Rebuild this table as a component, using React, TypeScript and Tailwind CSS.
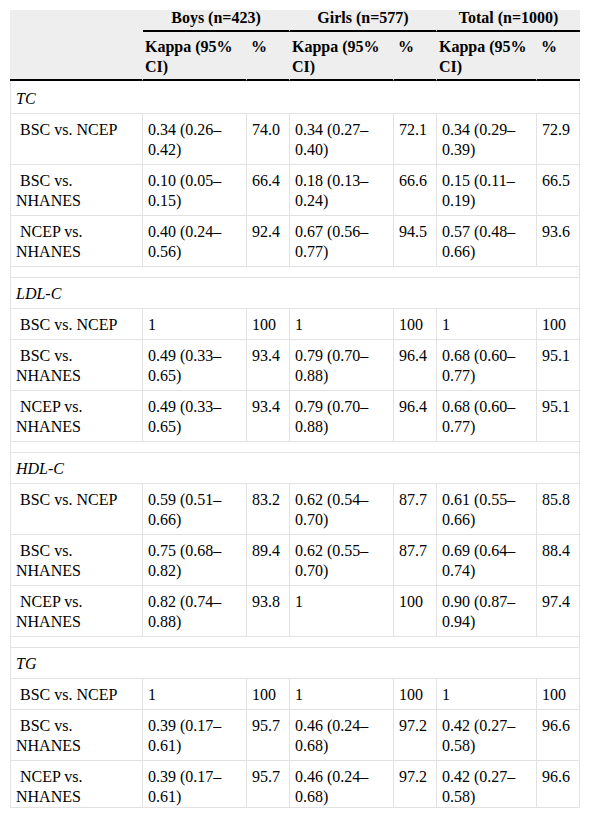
type Row = {
  label: string;
  cells: string[];
};

type Section = {
  title: string;
  rows: Row[];
};

const sections: Section[] = [
  {
    title: 'TC',
    rows: [
      { label: 'BSC vs. NCEP', cells: ['0.34 (0.26–0.42)', '74.0', '0.34 (0.27–0.40)', '72.1', '0.34 (0.29–0.39)', '72.9'] },
      { label: 'BSC vs. NHANES', cells: ['0.10 (0.05–0.15)', '66.4', '0.18 (0.13–0.24)', '66.6', '0.15 (0.11–0.19)', '66.5'] },
      { label: 'NCEP vs. NHANES', cells: ['0.40 (0.24–0.56)', '92.4', '0.67 (0.56–0.77)', '94.5', '0.57 (0.48–0.66)', '93.6'] },
    ],
  },
  {
    title: 'LDL-C',
    rows: [
      { label: 'BSC vs. NCEP', cells: ['1', '100', '1', '100', '1', '100'] },
      { label: 'BSC vs. NHANES', cells: ['0.49 (0.33–0.65)', '93.4', '0.79 (0.70–0.88)', '96.4', '0.68 (0.60–0.77)', '95.1'] },
      { label: 'NCEP vs. NHANES', cells: ['0.49 (0.33–0.65)', '93.4', '0.79 (0.70–0.88)', '96.4', '0.68 (0.60–0.77)', '95.1'] },
    ],
  },
  {
    title: 'HDL-C',
    rows: [
      { label: 'BSC vs. NCEP', cells: ['0.59 (0.51–0.66)', '83.2', '0.62 (0.54–0.70)', '87.7', '0.61 (0.55–0.66)', '85.8'] },
      { label: 'BSC vs. NHANES', cells: ['0.75 (0.68–0.82)', '89.4', '0.62 (0.55–0.70)', '87.7', '0.69 (0.64–0.74)', '88.4'] },
      { label: 'NCEP vs. NHANES', cells: ['0.82 (0.74–0.88)', '93.8', '1', '100', '0.90 (0.87–0.94)', '97.4'] },
    ],
  },
  {
    title: 'TG',
    rows: [
      { label: 'BSC vs. NCEP', cells: ['1', '100', '1', '100', '1', '100'] },
      { label: 'BSC vs. NHANES', cells: ['0.39 (0.17–0.61)', '95.7', '0.46 (0.24–0.68)', '97.2', '0.42 (0.27–0.58)', '96.6'] },
      { label: 'NCEP vs. NHANES', cells: ['0.39 (0.17–0.61)', '95.7', '0.46 (0.24–0.68)', '97.2', '0.42 (0.27–0.58)', '96.6'] },
    ],
  },
];

const groups = ['Boys (n=423)', 'Girls (n=577)', 'Total (n=1000)'];

export default function App() {
  return (
    <div className="min-h-screen bg-white pl-[10px] pt-[10px] font-['Liberation_Serif',serif] text-[16px] leading-5 text-black">
      <table className="w-[570px] table-fixed border-separate border-spacing-0">
        <colgroup>
          <col className="w-[133px]" />
          <col className="w-[104px]" />
          <col className="w-[43px]" />
          <col className="w-[104px]" />
          <col className="w-[43px]" />
          <col className="w-[100px]" />
          <col className="w-[43px]" />
        </colgroup>
        <thead className="bg-[#eeeeee]">
          <tr>
            <th rowSpan={2} className="border-b-2 border-r border-b-black border-r-transparent p-0" />
            {groups.map((g, i) => (
              <th
                key={g}
                colSpan={2}
                className={`border-b-2 border-b-black px-[2px] pb-[4px] pt-0 text-center font-bold leading-4 ${
                  i < groups.length - 1 ? 'border-r border-r-transparent' : ''
                }`}
              >
                {g}
              </th>
            ))}
          </tr>
          <tr>
            {[0, 1, 2].map((i) => (
              <>
                <th
                  key={`k${i}`}
                  className="border-b-2 border-r border-b-black border-r-transparent pb-[2px] pl-[2px] pr-[4px] pt-[5px] text-left align-top font-bold"
                >
                  Kappa (95% CI)
                </th>
                <th
                  key={`p${i}`}
                  className={`border-b-2 border-b-black pb-[2px] pl-[4px] pr-[2px] pt-[5px] text-left align-top font-bold ${
                    i < 2 ? 'border-r border-r-transparent' : ''
                  }`}
                >
                  %
                </th>
              </>
            ))}
          </tr>
        </thead>
        <tbody>
          {sections.map((s, si) => (
            <>
              {si > 0 && (
                <tr key={`sp${si}`}>
                  <td colSpan={7} className="border-x border-b border-[#e2e2e2] p-0">
                    <div className="h-[10px]" />
                  </td>
                </tr>
              )}
              <tr key={`t${si}`}>
                <td
                  colSpan={7}
                  className={`border-x border-b border-[#e2e2e2] px-[5px] italic ${
                    si === 0 ? 'pb-[4px] pt-[8px]' : 'pb-[4px] pt-[6px]'
                  }`}
                >
                  {s.title}
                </td>
              </tr>
              {s.rows.map((r, ri) => {
                const last = si === sections.length - 1 && ri === s.rows.length - 1;
                return (
                  <tr key={`${si}-${ri}`}>
                    <td
                      className={`border-x border-b border-[#e2e2e2] px-[5px] pt-[6px] align-top ${
                        last ? 'pb-0' : 'pb-[4px]'
                      }`}
                    >
                      {'\u00a0' + r.label}
                    </td>
                    {r.cells.map((c, ci) => (
                      <td
                        key={ci}
                        className={`border-b border-r border-[#e2e2e2] px-[5px] pt-[6px] align-top ${
                          last ? 'pb-0' : 'pb-[4px]'
                        }`}
                      >
                        {c}
                      </td>
                    ))}
                  </tr>
                );
              })}
            </>
          ))}
        </tbody>
      </table>
    </div>
  );
}
